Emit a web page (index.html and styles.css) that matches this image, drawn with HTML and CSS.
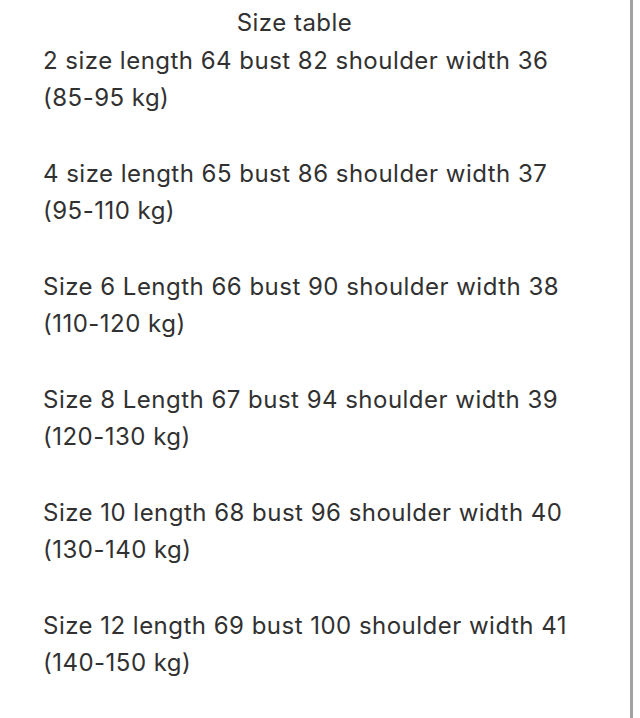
FILE: index.html
```html
<!DOCTYPE html>
<html>
<head>
<meta charset="utf-8">
<link rel="stylesheet" href="styles.css">
</head>
<body>
<div class="page">
  <div class="sheet">
    <div class="content">
      <div class="title">Size table</div>
      <div class="line">2 size length 64 bust 82 shoulder width 36</div>
      <div class="line">(85-95 kg)</div>
      <div class="blank"></div>
      <div class="line">4 size length 65 bust 86 shoulder width 37</div>
      <div class="line">(95-110 kg)</div>
      <div class="blank"></div>
      <div class="line">Size 6 Length 66 bust 90 shoulder width 38</div>
      <div class="line">(110-120 kg)</div>
      <div class="blank"></div>
      <div class="line">Size 8 Length 67 bust 94 shoulder width 39</div>
      <div class="line">(120-130 kg)</div>
      <div class="blank"></div>
      <div class="line">Size 10 length 68 bust 96 shoulder width 40</div>
      <div class="line">(130-140 kg)</div>
      <div class="blank"></div>
      <div class="line">Size 12 length 69 bust 100 shoulder width 41</div>
      <div class="line">(140-150 kg)</div>
    </div>
  </div>
</div>
</body>
</html>
```
FILE: styles.css
```css
html, body {
  margin: 0;
  padding: 0;
  background: #ffffff;
}
.page {
  width: 640px;
  height: 718px;
  display: flex;
  background: #ffffff;
}
.sheet {
  width: 630px;
  height: 718px;
  border-right: 3px solid #a2a2a2;
  box-sizing: content-box;
}
.content {
  width: 503px;
  padding: 4px 0 0 43px;
  font-family: Inter, "Noto Sans", sans-serif;
  font-size: 24px;
  letter-spacing: 0.48px;
  line-height: 37.67px;
  color: #313131;
  white-space: nowrap;
}
.title {
  text-align: center;
}
.blank {
  height: 37.67px;
}
```
